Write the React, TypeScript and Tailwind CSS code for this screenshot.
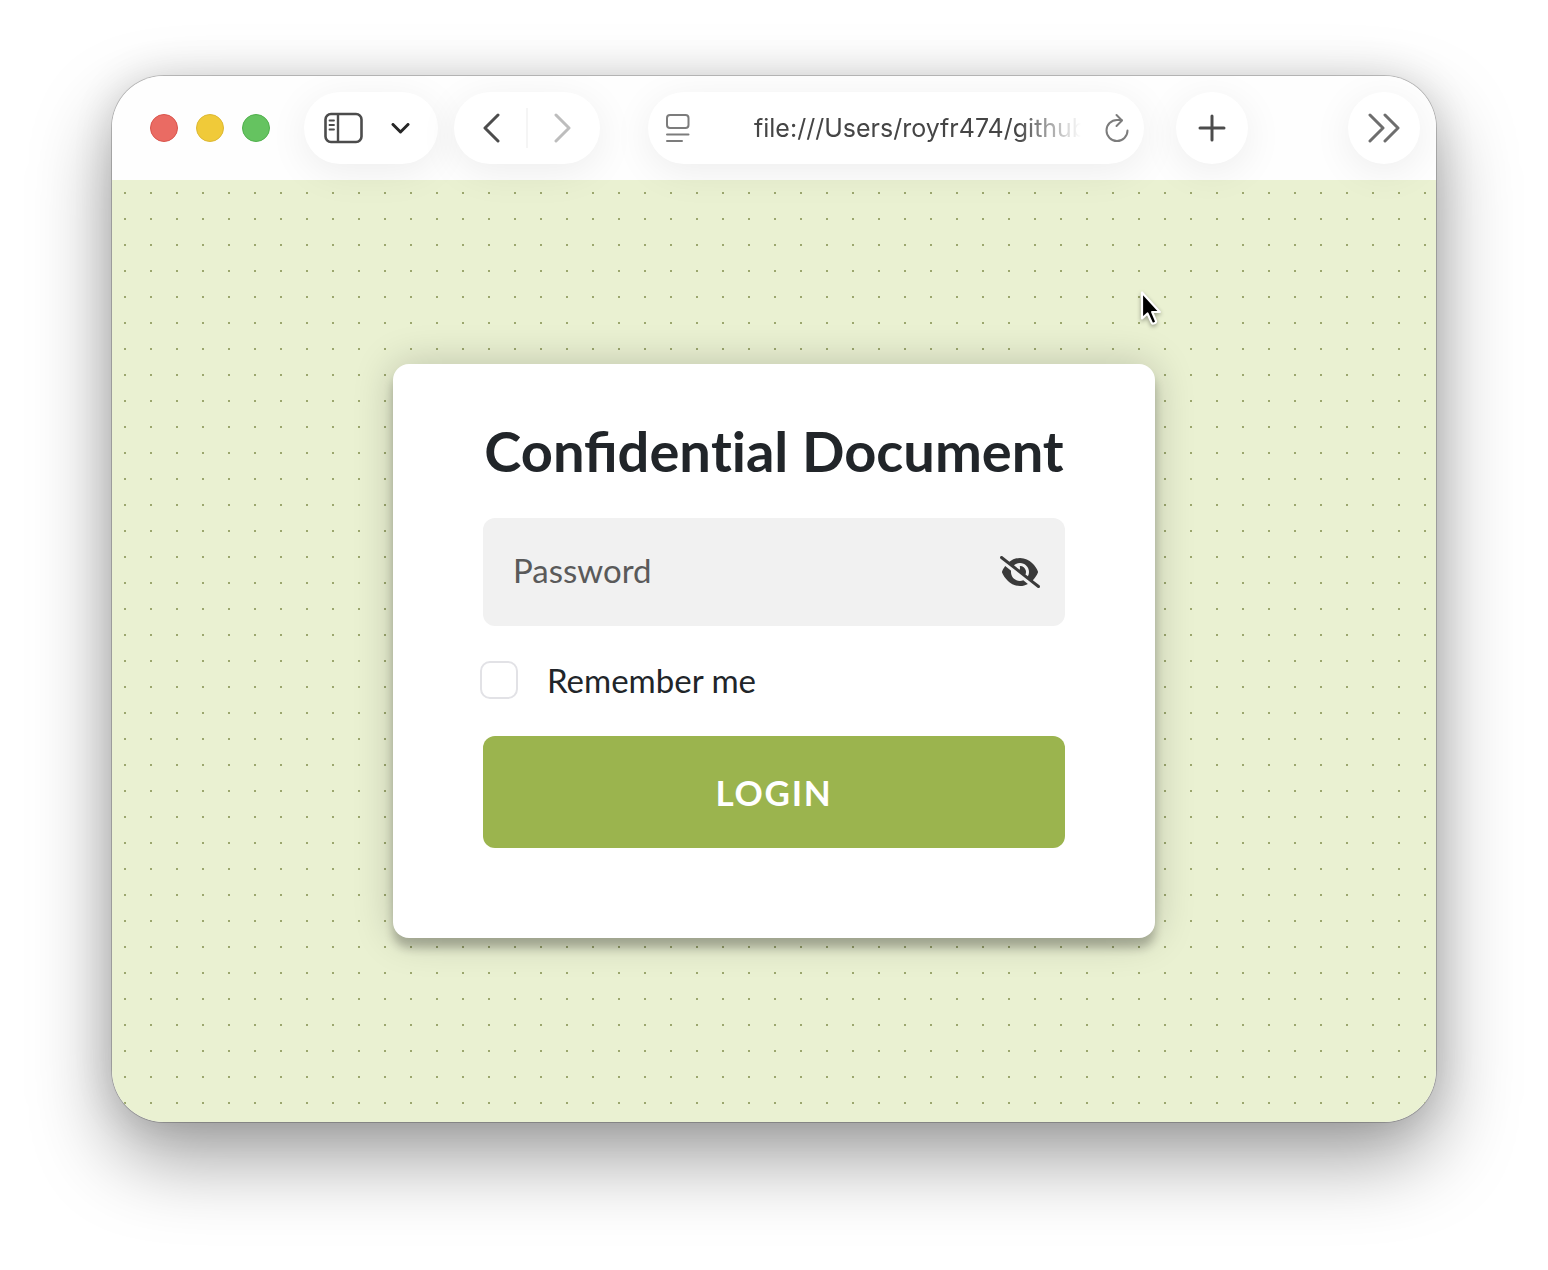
import { useState } from "react";
import { FaEyeSlash } from "react-icons/fa6";

const pill =
  "flex h-18 shrink-0 items-center rounded-full bg-white shadow-[0_8px_40px_rgba(0,0,0,0.07)]";

function SidebarIcon() {
  return (
    <svg width="39" height="32" viewBox="0 0 39 32" fill="none" stroke="#4c4c4c">
      <rect x="1.5" y="2" width="36" height="28" rx="5.5" strokeWidth="2.6" />
      <path d="M14 2v28" strokeWidth="2.4" />
      <path d="M5.5 8.5h4.5M5.5 13h4.5M5.5 17.5h4.5" strokeWidth="1.8" strokeLinecap="round" />
    </svg>
  );
}

function ReaderIcon() {
  return (
    <svg width="24" height="28" viewBox="0 0 24 28" fill="none" stroke="#7c7c7c" strokeWidth="2" strokeLinecap="round">
      <rect x="1" y="1" width="21.5" height="13" rx="3" />
      <path d="M1 20.5h21.5M1 27h15" />
    </svg>
  );
}

function ReloadIcon() {
  return (
    <svg width="24" height="30" viewBox="0 0 24 30" fill="none" stroke="#7c7c7c" strokeWidth="2" strokeLinecap="round" strokeLinejoin="round">
      <path d="M22.5 17.5A10.5 10.5 0 1 1 12 7h4.5" />
      <path d="M11.5 2l5.5 5.5-5.5 5.5" />
    </svg>
  );
}

function Cursor() {
  return (
    <svg width="28" height="42" viewBox="0 0 28 42" className="drop-shadow-[0_2px_2px_rgba(0,0,0,0.35)]">
      <path
        d="M3 2.5v26l5.500-5 4.200 9.300c.9 1.900 5 .2 4.200-1.900l-3.700-8.900h7.600z"
        fill="#000"
        stroke="#fff"
        strokeWidth="2.2"
        strokeLinejoin="round"
      />
    </svg>
  );
}

function Toolbar() {
  return (
    <header className="relative z-10 flex h-26 items-center bg-[#fefefe] pl-[38px] pr-4">
      <div className="mr-[34px] flex shrink-0 gap-[18px]">
        <button aria-label="Close" className="size-7 rounded-full border border-[#d9544c] bg-[#ea6b63]" />
        <button aria-label="Minimize" className="size-7 rounded-full border border-[#dcb833] bg-[#f0ca39]" />
        <button aria-label="Zoom" className="size-7 rounded-full border border-[#50b04c] bg-[#65c360]" />
      </div>

      <div className={`${pill} mr-4 gap-7 pl-5 pr-7`}>
        <button aria-label="Sidebar">
          <SidebarIcon />
        </button>
        <button aria-label="Tab groups">
          <svg width="19" height="11" viewBox="0 0 19 11" fill="none" stroke="#262626" strokeWidth="3" strokeLinecap="round" strokeLinejoin="round">
            <path d="M2 1.5l7.500 7.500L17 1.5" />
          </svg>
        </button>
      </div>

      <div className={`${pill} mr-12 gap-[26px] px-7`}>
        <button aria-label="Back">
          <svg width="18" height="30" viewBox="0 0 18 30" fill="none" stroke="#4c4c4c" strokeWidth="3" strokeLinecap="round" strokeLinejoin="round">
            <path d="M16 2L3 15l13 13" />
          </svg>
        </button>
        <span className="h-10 w-0.5 bg-[#f5f5f5]" />
        <button aria-label="Forward">
          <svg width="18" height="30" viewBox="0 0 18 30" fill="none" stroke="#bdbdbd" strokeWidth="3" strokeLinecap="round" strokeLinejoin="round">
            <path d="M2 2l13 13L2 28" />
          </svg>
        </button>
      </div>

      <div className={`${pill} mr-8 min-w-0 flex-1 pl-[18px] pr-[15px]`}>
        <button aria-label="Reader">
          <ReaderIcon />
        </button>
        <input
          aria-label="Address"
          readOnly
          value="file:///Users/royfr474/github"
          className="ml-16 mr-6 h-10 min-w-0 flex-1 bg-transparent font-['Inter',sans-serif] text-[25px] text-[#454545] outline-none [mask-image:linear-gradient(to_right,#000_calc(100%-64px),transparent)]"
        />
        <button aria-label="Reload">
          <ReloadIcon />
        </button>
      </div>

      <button aria-label="New tab" className={`${pill} w-18 justify-center`}>
        <svg width="28" height="28" viewBox="0 0 28 28" fill="none" stroke="#4c4c4c" strokeWidth="3" strokeLinecap="round">
          <path d="M14 2v24M2 14h24" />
        </svg>
      </button>

      <button aria-label="More" className={`${pill} ml-25 w-18 justify-center`}>
        <svg width="32" height="30" viewBox="0 0 32 30" fill="none" stroke="#6e6e6e" strokeWidth="3" strokeLinecap="round" strokeLinejoin="round">
          <path d="M2 2l13 13L2 28M17 2l13 13-13 13" />
        </svg>
      </button>
    </header>
  );
}

function LoginCard() {
  const [password, setPassword] = useState("");
  const [visible, setVisible] = useState(false);
  const [remember, setRemember] = useState(false);

  return (
    <form
      onSubmit={(e) => e.preventDefault()}
      className="w-full max-w-[762px] rounded-2xl bg-white px-[90px] pb-[90px] pt-12 shadow-[0_0_40px_rgba(0,0,0,0.2),0_10px_10px_rgba(0,0,0,0.24)]"
    >
      <h1 className="mb-7 whitespace-nowrap text-center text-[56px] font-bold leading-[78px] text-[#212529]">
        Confiden<span className="[font-variant-ligatures:none]">tial</span> Document
      </h1>

      <div className="flex h-27 items-center rounded-xl bg-[#f1f1f1] pl-[30px] pr-[25px]">
        <input
          type={visible ? "text" : "password"}
          aria-label="Password"
          placeholder="Password"
          value={password}
          onChange={(e) => setPassword(e.target.value)}
          className="h-26 min-w-0 flex-1 self-start bg-transparent text-[33px] text-[#212529] outline-none placeholder:text-[#5a5a5a]"
        />
        <button
          type="button"
          aria-label="Show password"
          onClick={() => setVisible(!visible)}
          className="text-[#3a3a3a]"
        >
          <FaEyeSlash className="h-8 w-10" />
        </button>
      </div>

      <label className="flex items-center gap-8 pb-[37px] pt-[35px] text-[33px] leading-[38px] text-[#212529]">
        <input
          type="checkbox"
          checked={remember}
          onChange={(e) => setRemember(e.target.checked)}
          className="size-8 shrink-0 appearance-none rounded-[7px] outline-2 outline-offset-1 outline-[#e2e2e6] checked:bg-[#9bb44e]"
        />
        Remember me
      </label>

      <button
        type="submit"
        className="h-28 w-full rounded-xl bg-[#9bb44e] text-[35px] font-bold tracking-wider text-white"
      >
        LOGIN
      </button>
    </form>
  );
}

export default function App() {
  return (
    <div className="flex min-h-screen bg-white px-28 pb-37 pt-19 font-['Lato','Noto_Sans',sans-serif]">
      <div className="flex min-w-0 flex-1 flex-col overflow-hidden rounded-[52px] shadow-[0_0_0_1px_rgba(0,0,0,0.2),0_36px_80px_rgba(0,0,0,0.38),0_0_40px_rgba(0,0,0,0.12)]">
        <Toolbar />

        {/* dotted page background */}
        <main className="relative flex flex-1 items-center justify-center bg-[#eaf1d2] bg-[conic-gradient(from_270deg_at_2px_2px,#9ca76e_90deg,transparent_0)] bg-[length:26px_26px] bg-[position:12px_12px]">
          <LoginCard />

          <div className="pointer-events-none absolute left-[1027px] top-[110px]">
            <Cursor />
          </div>
        </main>
      </div>
    </div>
  );
}
